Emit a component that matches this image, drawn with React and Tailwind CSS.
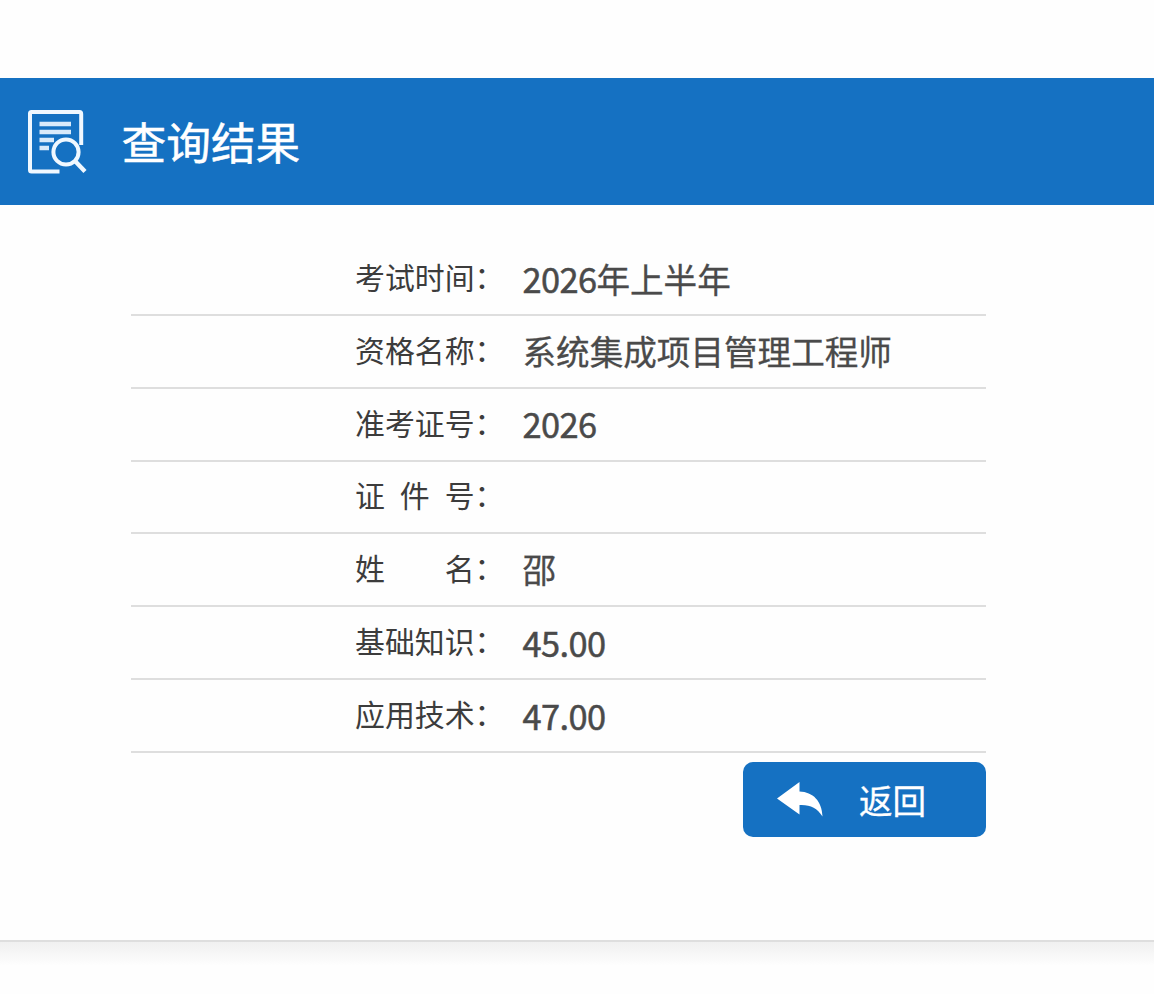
const rows = [
  { label: ['考试时间'], number: '2026', text: '年上半年' },
  { label: ['资格名称'], text: '系统集成项目管理工程师' },
  { label: ['准考证号'], number: '2026' },
  { label: ['证', '件', '号'] },
  { label: ['姓', '名'], text: '邵' },
  { label: ['基础知识'], number: '45.00' },
  { label: ['应用技术'], number: '47.00' },
];

const ResultIcon = () => (
  <svg width="60" height="66" viewBox="0 0 60 66" fill="none" stroke="#f0f8ff" strokeWidth="4">
    <path d="M53.2 36V5Q53.2 3 51.5 3H3.5Q2 3 2 4.5V61Q2 62.5 3.5 62.5H31.5" />
    <path d="M11.5 15H43M11.5 23H43M11.5 31H26M11.5 39H21" stroke="#d9eafa" strokeWidth="4.4" />
    <circle cx="38" cy="43" r="12.6" />
    <path d="M47 52L57 62.5" strokeWidth="4.4" />
  </svg>
);

const BackIcon = () => (
  <svg width="46" height="36" viewBox="0 0 46 36" fill="#fff">
    <path d="M0 16.5L22.5 0V9.5C36 10 45 19 45.5 34.5C40 25.5 33 22.5 22.5 23V32.5Z" />
  </svg>
);

const App = () => {
  return (
    <div className="h-[994px] overflow-hidden bg-[#fefefe] pt-[78.4px] font-['Noto_Sans_CJK_SC',sans-serif]">
      <div className="h-[861.2px]">
        {/* Title bar */}
        <div className="flex h-[127px] items-center bg-[#1571c2] pl-[28px]">
          <ResultIcon />
          <h1 className="mb-[1px] ml-[33.5px] text-[44.7px] leading-[60px] text-white [-webkit-text-stroke:0.5px_white]">查询结果</h1>
        </div>

        {/* Result list */}
        <div className="ml-[130.5px] w-[855.5px] pt-[37.8px]">
          {rows.map((row, index) => (
            <div key={index} className="flex h-[72.8px] items-center border-b-2 border-[#dedede]">
              <div className="mb-[5px] ml-[224.5px] flex w-[167.5px] text-[29.9px] leading-[40px] text-[#3c3c3c]">
                <span className="flex w-[119.6px] shrink-0 justify-between">
                  {row.label.map((part) => (
                    <span key={part}>{part}</span>
                  ))}
                </span>
                <span className="-mt-[1px]">：</span>
              </div>
              <div className="mb-[1.5px] flex h-[40px] items-baseline text-[33.6px] leading-[40px] whitespace-nowrap text-[#4a4a4a] [-webkit-text-stroke:0.3px_#4a4a4a]">
                {row.number && (
                  <span className="text-[34.4px] tracking-[-0.6px] [-webkit-text-stroke:0.5px_#4a4a4a]">{row.number}</span>
                )}
                {row.text && <span>{row.text}</span>}
              </div>
            </div>
          ))}

          <div className="flex justify-end pt-[9.5px]">
            <button className="flex h-[74.5px] w-[243px] items-center rounded-[10px] bg-[#1571c2] pl-[34px] text-[33.6px] leading-[40px] text-white [-webkit-text-stroke:0.3px_white]">
              <BackIcon />
              <span className="ml-[36px]">返回</span>
            </button>
          </div>
        </div>
      </div>

      {/* Panel bottom edge */}
      <div className="h-[2px] bg-[#dedede]" />
      <div className="h-[24px] bg-linear-to-b from-[#f0f0f0] to-[#fefefe]" />
    </div>
  );
};

export default App;
